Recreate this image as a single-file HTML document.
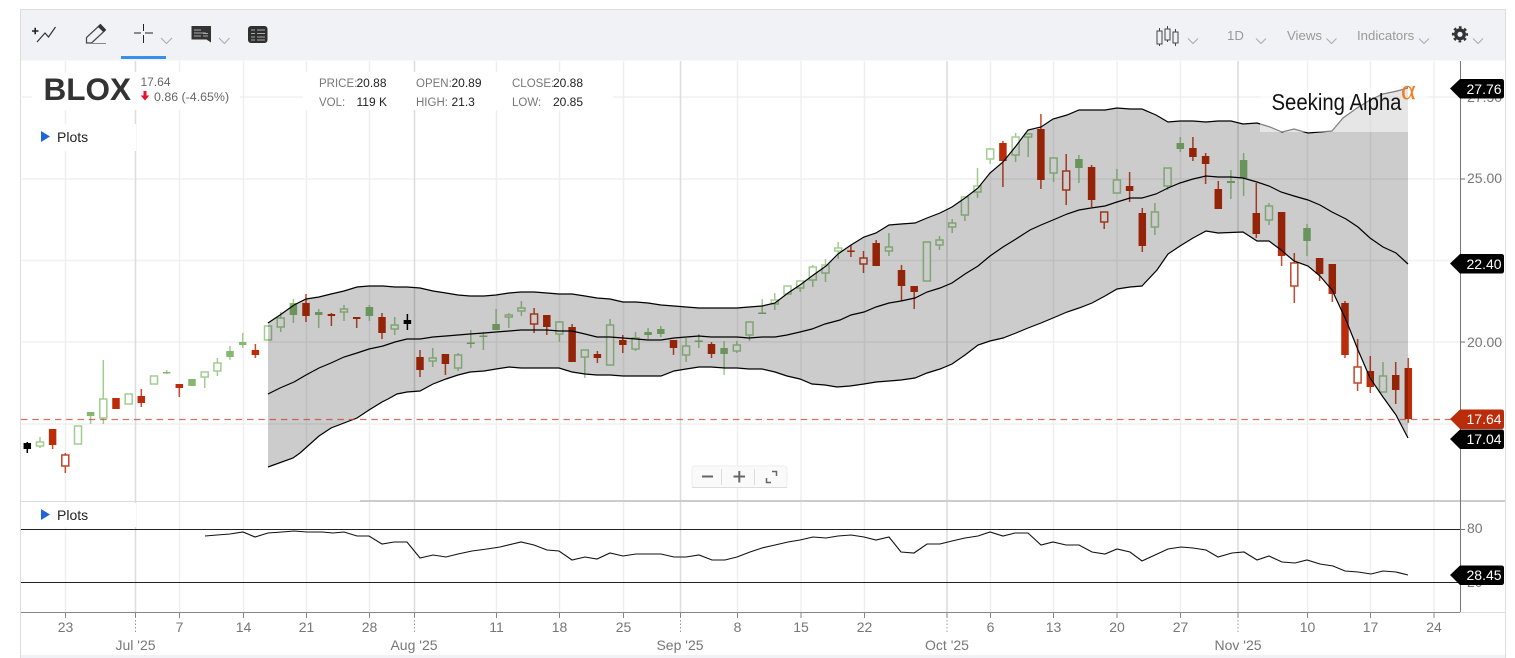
<!DOCTYPE html>
<html>
<head>
<meta charset="utf-8">
<title>BLOX chart</title>
<style>
html,body{margin:0;padding:0;background:#fff;width:1515px;height:658px;overflow:hidden}
svg{display:block;font-family:"Liberation Sans",Arial,sans-serif}
.gh{stroke:#f0f0f0;stroke-width:1.5;fill:none}
.gv{stroke:#efefef;stroke-width:1.5;fill:none}
.gm{stroke:#dcdcdc;stroke-width:1.5;fill:none}
.ch{fill:none;stroke:#aaa;stroke-width:1}
.ax{font-size:14px;fill:#777}
.tag{font-size:14px;fill:#fff}
.l{font-size:11.5px;fill:#777}
.v{font-size:12px;fill:#222}
.tb{font-size:13.2px;fill:#999}
.wg{fill:none;stroke:#9fcc8f;stroke-width:1.5}
.wr{fill:none;stroke:#c9492c;stroke-width:1.5}
.wb{fill:none;stroke:#000;stroke-width:1.5}
.bg{fill:none;stroke:#86b873;stroke-width:7.5}
.br{fill:none;stroke:#b92d0a;stroke-width:7.5}
.bb{fill:none;stroke:#000;stroke-width:7.5}
.hg rect{fill:#fff;stroke:#a0cd90;stroke-width:1.5}
.hr rect{fill:#fff;stroke:#c2452a;stroke-width:1.5}
.bl{fill:none;stroke:#000;stroke-width:1.2}
</style>
</head>
<body>
<svg xmlns="http://www.w3.org/2000/svg" width="1515" height="658" viewBox="0 0 1515 658">
<rect x="0" y="0" width="1515" height="658" fill="#fff"/>
<!-- frame -->
<rect x="20.5" y="9.5" width="1485" height="648" fill="#fff" stroke="#ddd"/>
<rect x="21" y="10" width="1484" height="50.5" fill="#f1f2f6"/>
<rect x="21" y="655" width="1484" height="3" fill="#f1f2f6"/>

<!-- grid -->
<path class="gh" d="M22 97H1504M22 179H1504M22 260.5H1504M22 342H1504M22 424H1504"/>
<path class="gv" d="M65.500 61V612M179.500 61V612M243.500 61V612M306.500 61V612M369.500 61V612M496.500 61V612M559.500 61V612M623.500 61V612M737.500 61V612M801 61V612M864.500 61V612M990.500 61V612M1053.500 61V612M1117 61V612M1180.500 61V612M1307.500 61V612M1370.500 61V612M1434 61V612"/>
<path class="gm" d="M135.500 61V612M414.500 61V612M680.500 61V612M947 61V612M1238 61V612"/>

<!-- white label backdrops -->
<rect x="32" y="72" width="208" height="38" fill="#fff"/>
<rect x="33" y="124" width="103" height="27" fill="#fff"/>
<rect x="303" y="72" width="310" height="38" fill="#fff"/>
<rect x="33" y="503" width="103" height="24" fill="#fff"/>

<!-- candle wicks -->
<path class="wg" d="M40 437V448M90.600 412V424M103.300 360V424M166.700 370V374M204.700 372V388M217.400 358V376M230 346V360M242.700 333V348M280.700 312V332M293.400 299V323M318.700 309V328M344 305V321M369.400 305V321M394.700 317V335M432.700 348V367M458.100 353V371M470.800 330V348M483.400 332V350M496.100 309V330M508.800 313V328M521.400 301V316M559.400 321V342M584.800 350V378M610.100 319V365M635.500 332V351M648.100 328V339M660.800 326V337M686.100 338V362M698.800 334V348M724.100 341V375M736.800 341V353M749.500 322V341M762.200 299V314M774.800 293V310M800.200 281V292M812.800 265V287M825.500 259V282M838.200 242V259M888.900 233V256M939.500 236V250M952.200 219V233M964.900 197V221M977.500 168V198M990.200 148V164M1015.600 133V162M1028.200 134V157M1053.600 158V182M1078.900 155V183M1116.900 169V193M1154.900 203V235M1167.600 168V190M1180.300 137V152M1230.900 170V199M1243.600 153V196M1269 203V225M1307 224V256M1383 362V392"/>
<path class="wr" d="M52.600 445V449M65.300 453V473M141.300 389V407M179.300 388V397M255.400 344V358M306 294V322M331.400 313V326M356.700 317V328M382 313V339M420 350V377M445.400 364V375M534.100 308V333M546.800 327V335M572.100 324V330M597.400 351V363M622.800 335V353M673.500 348V355M711.500 342V358M850.900 245V257M863.500 251V273M876.200 240V245M901.500 265V301M914.200 292V309M1002.900 141V187M1040.900 114V189M1066.200 154V205M1091.600 165V207M1104.200 222V229M1129.600 172V202M1142.300 208V252M1192.900 137V161M1205.600 153V184M1218.300 181V190M1256.300 183V238M1281.600 256V266M1294.300 253V303M1319.600 274V281M1332.300 294V302M1345 301V358M1357.600 339V391M1370.300 356V393M1395.700 362V404M1408.300 358V423"/>
<path class="wb" d="M27.300 442V453M407.400 314V330"/>

<!-- hollow green -->
<g class="hg">
<rect x="36.500" y="442" width="7" height="4"/><rect x="74.500" y="426" width="7" height="18"/><rect x="99.800" y="399" width="7" height="19"/><rect x="125.200" y="394" width="7" height="10"/><rect x="150.500" y="376" width="7" height="8"/><rect x="201.200" y="372" width="7" height="5"/><rect x="213.900" y="363" width="7" height="8"/><rect x="264.500" y="326" width="7" height="14"/><rect x="277.200" y="318" width="7" height="9"/><rect x="340.500" y="309" width="7" height="3"/><rect x="391.200" y="325" width="7" height="4"/><rect x="429.200" y="358" width="7" height="3"/><rect x="454.600" y="355" width="7" height="13"/><rect x="505.300" y="315" width="7" height="2"/><rect x="517.900" y="308" width="7" height="3"/><rect x="555.900" y="322" width="7" height="12"/><rect x="581.300" y="350" width="7" height="7"/><rect x="606.600" y="325" width="7" height="40"/><rect x="632" y="338" width="7" height="11"/><rect x="682.600" y="346" width="7" height="9"/><rect x="733.300" y="345" width="7" height="6"/><rect x="746" y="322" width="7" height="13"/><rect x="771.300" y="300" width="7" height="4"/><rect x="784" y="286" width="7" height="8"/><rect x="796.700" y="281" width="7" height="7"/><rect x="809.300" y="267" width="7" height="13"/><rect x="822" y="265" width="7" height="8"/><rect x="834.700" y="248" width="7" height="3"/><rect x="885.400" y="247" width="7" height="4"/><rect x="923.400" y="242" width="7" height="39"/><rect x="936" y="240" width="7" height="5"/><rect x="948.700" y="223" width="7" height="4"/><rect x="961.400" y="197" width="7" height="18"/><rect x="974" y="186" width="7" height="6"/><rect x="986.700" y="149" width="7" height="10"/><rect x="1012.100" y="137" width="7" height="18"/><rect x="1024.700" y="134" width="7" height="3"/><rect x="1050.100" y="158" width="7" height="15"/><rect x="1113.400" y="180" width="7" height="13"/><rect x="1151.400" y="212" width="7" height="15"/><rect x="1164.100" y="168" width="7" height="18"/><rect x="1265.500" y="206" width="7" height="14"/><rect x="1379.500" y="376" width="7" height="16"/>
</g>
<!-- hollow red -->
<g class="hr">
<rect x="61.800" y="455" width="7" height="11"/><rect x="530.600" y="314" width="7" height="10"/><rect x="860" y="258" width="7" height="6"/><rect x="1062.700" y="171" width="7" height="19"/><rect x="1100.700" y="212" width="7" height="10"/><rect x="1290.800" y="263" width="7" height="23"/><rect x="1354.100" y="367" width="7" height="16"/>
</g>
<!-- filled bodies -->
<path class="bg" d="M90.600 412V416M166.700 372V373.500M192 379V386M230 351V357M242.700 342V345M293.400 303V315M318.700 312V315M369.400 307V316M496.100 324V330M648.100 332V335M660.800 329V334M724.100 348V354M1078.900 159V168M1180.300 143V149M1243.600 160V178M1307 228V241"/>
<path class="bg" style="stroke-width:8" d="M470.800 342.500V344M483.400 335.500V337M698.800 340.500V342M762.200 312.500V314M1230.900 181V183"/>
<path class="br" d="M52.600 429V445M116 398V409M141.300 396V403M179.300 384V388M255.400 350V355M306 303V316M331.400 314V316M356.700 317V319M382 317V333M420 357V370M445.400 354V364M546.800 315V327M572.100 327V362M597.400 354V358M622.800 340V345M673.500 340V348M711.500 344V354M850.900 250.500V252M876.200 243V266M901.500 270V286M914.200 286V292M1002.900 143V161M1040.900 129V180M1091.600 167V200M1129.600 186V191M1142.300 213V246M1192.900 148V157M1205.600 156V164M1218.300 189V209M1256.300 213V234M1281.600 212V256M1319.600 258V274M1332.300 264V294M1345 303V355M1370.300 371V387M1395.700 375V390M1408.300 368V419"/>
<path class="bb" d="M27.300 443V449M407.400 320V324"/>

<!-- bollinger band -->
<polygon fill="#000" fill-opacity="0.2" points="268,323 280,315 294,305 306,299 319,297 331,294 344,291 357,287 369,286 383,286 395,287 407,287 420,288 433,291 446,293 458,295 470,296 484,296 496,295 509,293 521,292 534,292 547,293 559,294 572,294 585,296 597,298 610,299 623,302 636,302 648,303 661,305 674,306 686,307 699,308 711,308 725,308 737,308 749,307 762,306 775,303 788,293 800,285 812,276 826,266 838,254 851,245 864,237 876,233 889,225 901,224 915,223 927,218 940,213 952,207 965,198 978,188 990,173 1003,162 1016,146 1028,130 1041,127 1053,119 1067,115 1079,110 1091,110 1105,110 1117,108 1130,109 1142,109 1156,115 1168,122 1180,121 1193,121 1206,122 1218,121 1231,121 1243,124 1257,123 1270,127 1282,132 1294,129 1308,133 1332,131 1343,118 1357,108 1370,100 1383,94 1397,91 1408,88 1408,438 1396,415 1383,397 1370,378 1358,350 1346,320 1332,290 1320,276 1308,266 1294,261 1281,250 1269,241 1257,241 1243,232 1218,233 1206,231 1193,238 1180,246 1168,254 1157,270 1142,286 1130,287 1117,289 1105,296 1092,303 1079,308 1067,312 1053,318 1041,323 1028,328 1016,333 1003,338 990,341 978,345 965,355 952,364 940,369 927,373 915,378 901,380 889,381 876,382 864,384 850,386 837,387 825,385 812,384 800,379 787,376 775,372 762,369 749,369 737,368 725,368 711,367 699,367 686,369 674,371 661,376 623,376 610,375 597,375 585,374 572,372 559,368 547,368 521,368 509,367 496,369 484,371 470,372 458,375 446,379 433,384 420,391 407,392 397,394 388,399 382,402 369,410 357,418 331,428 319,436 300,453 293,458 268,467"/>
<polyline class="bl" points="268,323 280,315 294,305 306,299 319,297 331,294 344,291 357,287 369,286 383,286 395,287 407,287 420,288 433,291 446,293 458,295 470,296 484,296 496,295 509,293 521,292 534,292 547,293 559,294 572,294 585,296 597,298 610,299 623,302 636,302 648,303 661,305 674,306 686,307 699,308 711,308 725,308 737,308 749,307 762,306 775,303 788,293 800,285 812,276 826,266 838,254 851,245 864,237 876,233 889,225 901,224 915,223 927,218 940,213 952,207 965,198 978,188 990,173 1003,162 1016,146 1028,130 1041,127 1053,119 1067,115 1079,110 1091,110 1105,110 1117,108 1130,109 1142,109 1156,115 1168,122 1180,121 1193,121 1206,122 1218,121 1231,121 1243,124 1257,123 1270,127 1282,132 1294,129 1308,133 1332,131 1343,118 1357,108 1370,100 1383,94 1397,91 1408,88"/>
<polyline class="bl" points="268,394 280,388 294,382 306,375 319,368 331,363 344,357 357,353 369,349 383,346 395,342 407,339 420,339 433,337 446,336 458,335 470,334 484,333 496,332 509,331 521,330 534,330 547,330 559,331 572,331 585,334 597,337 610,337 623,338 636,339 648,340 661,340 674,338 686,337 699,336 711,337 725,337 737,337 749,338 762,337 775,337 787,335 800,332 812,329 825,324 840,320 851,315 864,312 876,307 889,303 901,301 915,298 927,292 940,288 952,283 965,274 978,266 990,256 1003,247 1016,239 1030,230 1041,225 1053,220 1067,214 1079,210 1091,208 1105,206 1117,202 1130,198 1142,198 1156,194 1168,188 1180,183 1193,179 1206,176 1218,177 1231,177 1243,178 1257,182 1269,186 1281,192 1294,196 1308,200 1320,205 1332,212 1346,219 1358,227 1370,238 1383,247 1396,253 1408,264"/>
<polyline class="bl" points="268,467 293,458 300,453 319,436 331,428 357,418 369,410 382,402 388,399 397,394 407,392 420,391 433,384 446,379 458,375 470,372 484,371 496,369 509,367 521,368 547,368 559,368 572,372 585,374 597,375 610,375 623,376 661,376 674,371 686,369 699,367 711,367 725,368 737,368 749,369 762,369 775,372 787,376 800,379 812,384 825,385 837,387 850,386 864,384 876,382 889,381 901,380 915,378 927,373 940,369 952,364 965,355 978,345 990,341 1003,338 1016,333 1028,328 1041,323 1053,318 1067,312 1079,308 1092,303 1105,296 1117,289 1130,287 1142,286 1157,270 1168,254 1180,246 1193,238 1206,231 1218,233 1243,232 1257,241 1269,241 1281,250 1294,261 1308,266 1320,276 1332,290 1346,320 1358,350 1370,378 1383,397 1396,415 1408,438"/>

<!-- price dashed line -->
<path d="M21 419.500H1460" fill="none" stroke="#c0452c" stroke-opacity=".75" stroke-width="1.2" stroke-dasharray="6.500 4.800"/>

<!-- logo -->
<rect x="1260" y="88" width="168" height="44" fill="#fff" fill-opacity=".5"/>
<text x="1271.500" y="110" font-size="23" fill="#111" textLength="130" lengthAdjust="spacingAndGlyphs">Seeking Alpha</text>
<text x="1401" y="99" font-size="28" fill="#f47b20" style="font-family:'Liberation Serif',serif">α</text>

<!-- dividers & axes -->
<path d="M21 501.500H360" stroke="#ddd" stroke-width="1" fill="none"/>
<path d="M360 501H1505" stroke="#ccc" stroke-width="2" fill="none"/>
<path d="M21 529.500H1460M21 582.500H1460" stroke="#222" stroke-width="1" fill="none"/>
<path d="M1460.500 61V612" stroke="#777" stroke-width="1" fill="none"/>
<path d="M21 612.500H1460" stroke="#888" stroke-width="1" fill="none"/>
<path d="M1460 612.500H1505" stroke="#ddd" stroke-width="1" fill="none"/>
<path d="M1460 97.500H1465M1460 179H1465M1460 260.500H1465M1460 342H1465M1460 424H1465M1460 529.500H1465M1460 582.500H1465" stroke="#777" stroke-width="1" fill="none"/>
<path d="M65.500 612V618M179.500 612V618M243.500 612V618M306.500 612V618M369.500 612V618M496.500 612V618M559.500 612V618M623.500 612V618M737.500 612V618M801 612V618M864.500 612V618M990.500 612V618M1053.500 612V618M1117 612V618M1180.500 612V618M1307.500 612V618M1370.500 612V618M1434 612V618M135.500 612V618M414.500 612V618M680.500 612V618M947 612V618M1238 612V618" stroke="#888" stroke-width="1" fill="none"/>
<path d="M135.500 620V632M414.500 620V632M680.500 620V632M947 620V632M1238 620V632" stroke="#999" stroke-width="1" stroke-dasharray="1.500 2" fill="none"/>

<!-- RSI line -->
<polyline fill="none" stroke="#111" stroke-width="1.100" points="205,536 217,535 230,534 243,532 255,537 268,533 282,532 294,531 307,532 322,532 333,533 344,532 357,536 369,536 382,544 394,542 407,542 420,558 433,555 446,557 458,554 472,551 487,549 500,547 521,542 534,545 547,550 559,551 572,560 585,557 597,559 610,553 623,556 636,554 661,554 674,557 686,557 699,555 712,560 725,560 737,557 750,552 762,548 775,545 788,542 800,540 813,537 826,538 838,536 851,535 864,537 876,540 889,537 901,552 914,553 927,544 940,544 952,541 965,538 978,536 990,532 1003,536 1015,533 1028,533 1041,545 1053,542 1066,545 1079,545 1092,552 1105,554 1117,549 1130,552 1142,561 1155,555 1168,549 1181,547 1193,548 1206,550 1218,557 1232,553 1244,552 1257,560 1269,556 1282,562 1295,563 1307,560 1320,564 1333,566 1345,571 1358,572 1371,574 1383,571 1396,572 1408,575"/>

<!-- axis labels -->
<g class="ax">
<text x="1467" y="102">27.50</text>
<text x="1467" y="183">25.00</text>
<text x="1467" y="265">22.50</text>
<text x="1467" y="347">20.00</text>
<text x="1467" y="429">17.50</text>
<text x="1467" y="533">80</text>
<text x="1467" y="587">20</text>
</g>
<g class="ax" text-anchor="middle">
<text x="65.500" y="632">23</text><text x="179.500" y="632">7</text><text x="243.500" y="632">14</text><text x="306.500" y="632">21</text><text x="369.500" y="632">28</text><text x="496.500" y="632">11</text><text x="559.500" y="632">18</text><text x="623.500" y="632">25</text><text x="737.500" y="632">8</text><text x="801" y="632">15</text><text x="864.500" y="632">22</text><text x="990.500" y="632">6</text><text x="1053.500" y="632">13</text><text x="1117" y="632">20</text><text x="1180.500" y="632">27</text><text x="1307.500" y="632">10</text><text x="1370.500" y="632">17</text><text x="1434" y="632">24</text>
<text x="135.500" y="650">Jul '25</text><text x="414" y="650">Aug '25</text><text x="680" y="650">Sep '25</text><text x="947" y="650">Oct '25</text><text x="1238" y="650">Nov '25</text>
</g>

<!-- price tags -->
<path d="M1450 88.500L1460 79H1501.500Q1504 79 1504 81.500V96Q1504 98.500 1501.500 98.500H1460Z" fill="#000"/>
<path d="M1450 263.500L1460 254H1501.500Q1504 254 1504 256.500V271Q1504 273.500 1501.500 273.500H1460Z" fill="#000"/>
<path d="M1450 419L1460 409.500H1501.500Q1504 409.500 1504 412V426.500Q1504 429 1501.500 429H1460Z" fill="#bb2d0a"/>
<path d="M1450 439L1460 429.500H1501.500Q1504 429.500 1504 432V446.500Q1504 449 1501.500 449H1460Z" fill="#000"/>
<path d="M1450 575L1460 565.500H1501.500Q1504 565.500 1504 568V582.500Q1504 585 1501.500 585H1460Z" fill="#000"/>
<g class="tag">
<text x="1466.500" y="94">27.76</text>
<text x="1466.500" y="269">22.40</text>
<text x="1466.500" y="424">17.64</text>
<text x="1466.500" y="444">17.04</text>
<text x="1466.500" y="580">28.45</text>
</g>

<!-- header labels -->
<text x="43.500" y="100" font-size="31.500" font-weight="700" fill="#333">BLOX</text>
<text x="140.500" y="86" font-size="12" fill="#666">17.64</text>
<path d="M143.500 91H146.500V95.500H149.300L145 100.500L140.700 95.500H143.500Z" fill="#e8112d"/>
<text x="154" y="101" font-size="12.400" fill="#666">0.86 (-4.65%)</text>
<text class="l" x="319" y="87">PRICE:</text><text class="v" x="356.500" y="87">20.88</text>
<text class="l" x="319" y="106">VOL:</text><text class="v" x="356.500" y="106">119 K</text>
<text class="l" x="416" y="87">OPEN:</text><text class="v" x="451.500" y="87">20.89</text>
<text class="l" x="416" y="106">HIGH:</text><text class="v" x="451.500" y="106">21.3</text>
<text class="l" x="512" y="87">CLOSE:</text><text class="v" x="553" y="87">20.88</text>
<text class="l" x="512" y="106">LOW:</text><text class="v" x="553" y="106">20.85</text>

<path d="M41 131L50 136.500L41 142Z" fill="#1f66d8"/>
<text x="57" y="142" font-size="14" fill="#222">Plots</text>
<path d="M41 509L50 514.500L41 520Z" fill="#1f66d8"/>
<text x="57" y="520" font-size="14" fill="#222">Plots</text>

<!-- zoom control -->
<rect x="692" y="466" width="95" height="21.500" rx="3" fill="#fafafa" stroke="#eee"/>
<path d="M692 487.500H787" stroke="#ddd" fill="none"/>
<path d="M721.500 469V485M754.500 469V485" stroke="#ddd" fill="none"/>
<path d="M702 476.500H713" stroke="#666" stroke-width="2" fill="none"/>
<path d="M733.500 476.500H745M739.300 471V482.500" stroke="#666" stroke-width="2" fill="none"/>
<path d="M766.500 478V482.500H771M772 471.500H776.500V476" stroke="#666" stroke-width="1.500" fill="none"/>

<!-- toolbar left icons -->
<path d="M32 31H38.500M35.200 27.800V34.200" stroke="#222" stroke-width="1.600" fill="none"/>
<polyline points="37,42 45,33 48.500,37 55.500,27" fill="none" stroke="#333" stroke-width="1.200"/>
<path d="M86.500 43V37.500L100 25L105 30.500L91.500 43Z" fill="none" stroke="#444" stroke-width="1.200"/>
<path d="M100.500 23.800L106.200 29.800L103.500 32.300L97.500 26.500Z" fill="#333"/>
<path d="M86 43.500H106" stroke="#888" fill="none"/>
<path d="M134 33H141M145 33H153M143.500 24V31M143.500 35V43" stroke="#222" stroke-width="1" fill="none"/>
<polyline class="ch" points="161,38 166.500,43.500 172,38"/>
<rect x="121" y="56" width="45" height="3" fill="#3b8fec"/>
<path d="M191.500 26H211V42.500L206.500 39.500H191.500Z" fill="#333"/>
<path d="M194 30H201M194 33H206M194 36H201M203 33.500H208M203 36H208" stroke="#aaa" stroke-width="1" fill="none"/>
<polyline class="ch" points="219,38 224.500,43.500 229.500,38"/>
<rect x="248" y="26" width="19.500" height="17" rx="3" fill="#2f2f2f"/>
<path d="M251 30H255M257 30H265M251 33.500H255M257 33.500H265M251 37H255M257 37H265M251 40H255M257 40H265" stroke="#aaa" stroke-width="1.100" fill="none"/>

<!-- toolbar right icons -->
<path d="M1159.500 28V46M1167.500 26V42M1175.500 29V46" stroke="#444" stroke-width="1" fill="none"/>
<rect x="1157" y="31" width="5" height="13" fill="#f1f2f6" stroke="#444"/>
<rect x="1165" y="29" width="5" height="11" fill="#f1f2f6" stroke="#444"/>
<rect x="1173" y="32" width="5" height="11" fill="#f1f2f6" stroke="#444"/>
<polyline class="ch" points="1188,38.500 1193,43.500 1198,38.500"/>
<text class="tb" x="1227" y="40">1D</text>
<polyline class="ch" points="1256,38.500 1261,43.500 1266,38.500"/>
<text class="tb" x="1287" y="40">Views</text>
<polyline class="ch" points="1326.500,38.500 1331.500,43.500 1336.500,38.500"/>
<text class="tb" x="1357" y="40">Indicators</text>
<polyline class="ch" points="1419,38.500 1424,43.500 1429,38.500"/>
<circle cx="1460" cy="34.300" r="4.300" fill="none" stroke="#333" stroke-width="3.400"/>
<circle cx="1460" cy="34.300" r="7" fill="none" stroke="#333" stroke-width="2.200" stroke-dasharray="2.750 2.750" stroke-dashoffset="1.375"/>
<polyline class="ch" points="1473,38.500 1478,43.500 1483,38.500"/>
</svg>
</body>
</html>
